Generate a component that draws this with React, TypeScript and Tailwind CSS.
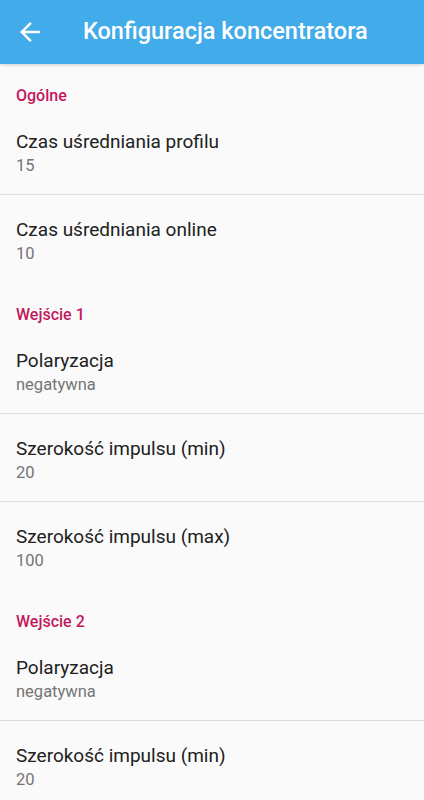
import React from "react";

interface PrefItem {
  title: string;
  value: string;
}

interface PrefCategory {
  name: string;
  items: PrefItem[];
}

const categories: PrefCategory[] = [
  {
    name: "Ogólne",
    items: [
      { title: "Czas uśredniania profilu", value: "15" },
      { title: "Czas uśredniania online", value: "10" },
    ],
  },
  {
    name: "Wejście 1",
    items: [
      { title: "Polaryzacja", value: "negatywna" },
      { title: "Szerokość impulsu (min)", value: "20" },
      { title: "Szerokość impulsu (max)", value: "100" },
    ],
  },
  {
    name: "Wejście 2",
    items: [
      { title: "Polaryzacja", value: "negatywna" },
      { title: "Szerokość impulsu (min)", value: "20" },
      { title: "Szerokość impulsu (max)", value: "100" },
    ],
  },
];

const BackArrow = () => (
  <svg width="30" height="30" viewBox="0 0 24 24" fill="white">
    <path d="M20 11H7.83l5.59-5.59L12 4l-8 8 8 8 1.41-1.41L7.83 13H20v-2z" />
  </svg>
);

export default function App() {
  return (
    <div className="w-[424px] h-[800px] overflow-hidden bg-[#fafafa] font-['Roboto',sans-serif]">
      {/* Toolbar */}
      <header className="relative z-10 h-16 bg-[#42abe9] flex items-center shadow-[0_1px_3px_rgba(0,0,0,0.18)]">
        <div className="w-[83px] pl-[15px] flex items-center">
          <BackArrow />
        </div>
        <h1 className="text-white text-[23.5px] font-medium">Konfiguracja koncentratora</h1>
      </header>

      {/* Preferences */}
      <main className="flex flex-col">
        {categories.map((cat) => (
          <section key={cat.name} className="flex flex-col">
            <div className="h-[43px] pt-[22px] px-4">
              <h2 className="text-[#c2185b] text-[16px] font-medium leading-5">{cat.name}</h2>
            </div>
            {cat.items.map((item, i) => (
              <div
                key={item.title + i}
                className={`h-[88px] px-4 pt-[23px] ${i < cat.items.length - 1 ? "border-b border-[#dedede]" : ""}`}
              >
                <div className="text-[#212121] text-[19px] leading-6">{item.title}</div>
                <div className="text-[#757575] text-[16.5px] leading-6">{item.value}</div>
              </div>
            ))}
          </section>
        ))}
      </main>
    </div>
  );
}
